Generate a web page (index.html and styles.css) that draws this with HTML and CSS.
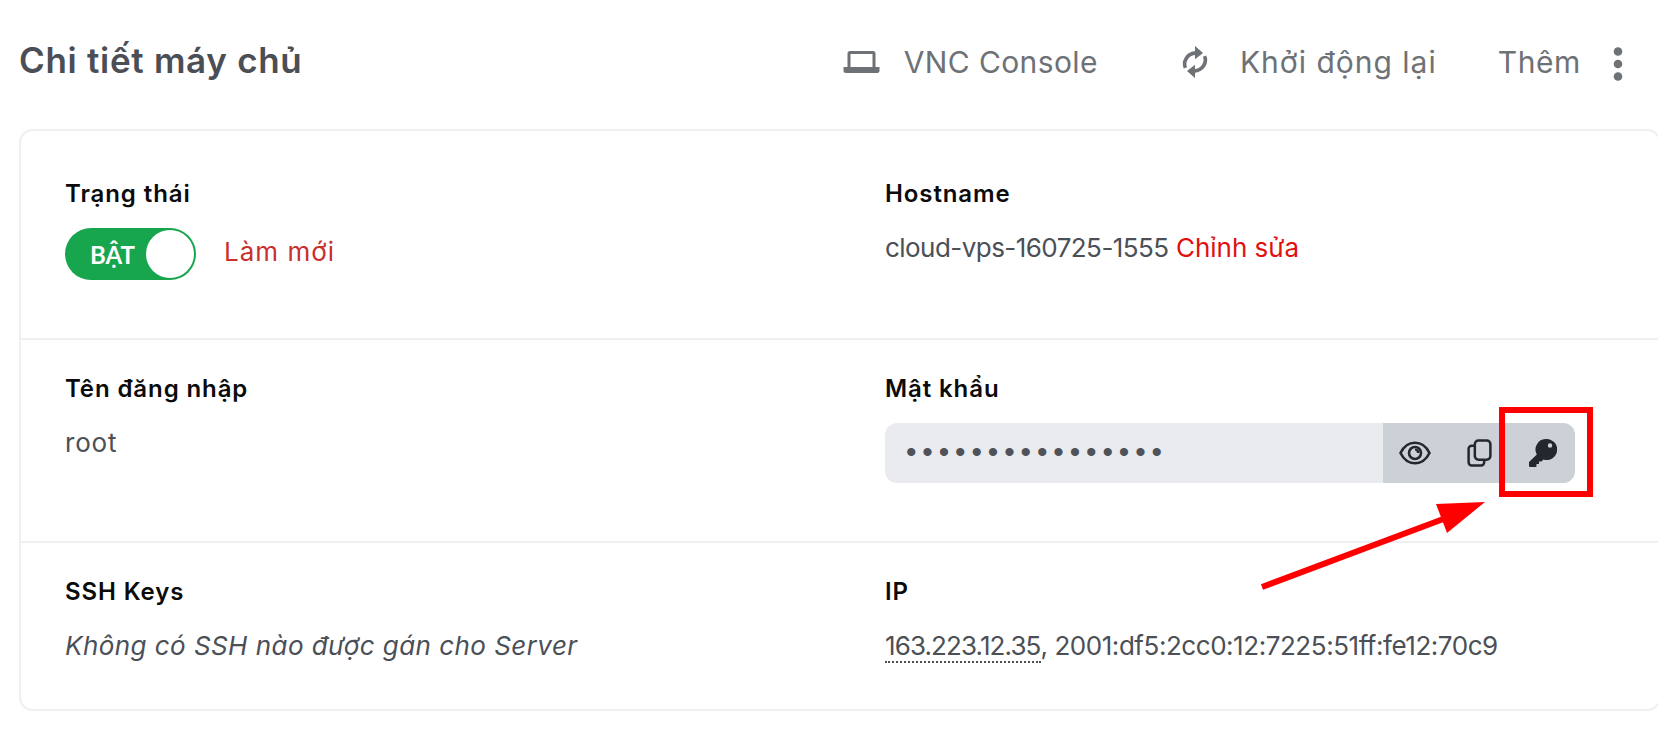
FILE: index.html
```html
<!DOCTYPE html>
<html lang="vi">
<head>
<meta charset="utf-8">
<title>Chi tiết máy chủ</title>
<link rel="stylesheet" href="styles.css">
</head>
<body>
<header class="topbar">
  <h1 class="title">Chi tiết máy chủ</h1>
  <nav class="actions">
    <a class="action action-vnc">
      <svg class="icon-laptop" viewBox="0 0 36 24"><path fill="none" stroke="currentColor" stroke-width="3" d="M5.500 18V3.500a1 1 0 0 1 1-1h23a1 1 0 0 1 1 1V18"/><path fill="currentColor" d="M0 17h36v3.500a2.500 2.500 0 0 1-2.500 2.500h-31A2.500 2.500 0 0 1 0 20.500z"/></svg>
      <span class="action-text">VNC Console</span>
    </a>
    <a class="action action-restart">
      <svg class="icon-sync" viewBox="0 0 24 30"><path fill="none" stroke="currentColor" stroke-width="3.400" d="M3 20.500C.6 14.500 4.500 7 13 6.500M21 9.500c2.400 6-1.500 13.500-10 14"/><path fill="currentColor" d="M12 0l7.500 6.500L12 12.500zM12 17.500l-7.500 6L12 30z"/></svg>
      <span class="action-text">Khởi động lại</span>
    </a>
    <a class="action action-more">
      <span class="action-text">Thêm</span>
      <svg class="icon-dots" viewBox="0 0 10 34"><circle cx="5" cy="4.500" r="4.300"/><circle cx="5" cy="17" r="4.300"/><circle cx="5" cy="29.500" r="4.300"/></svg>
    </a>
  </nav>
</header>

<main class="card">
  <section class="row row-1">
    <div class="cell">
      <div class="label">Trạng thái</div>
      <div class="status">
        <div class="toggle"><span class="toggle-text">BẬT</span><span class="knob"></span></div>
        <a class="refresh">Làm mới</a>
      </div>
    </div>
    <div class="cell">
      <div class="label">Hostname</div>
      <div class="value host"><span class="digits">cloud-vps-160725-1555</span> <a class="edit">Chỉnh sửa</a></div>
    </div>
  </section>
  <section class="row row-2">
    <div class="cell">
      <div class="label">Tên đăng nhập</div>
      <div class="value root">root</div>
    </div>
    <div class="cell">
      <div class="label">Mật khẩu</div>
      <div class="password">
        <div class="dots">••••••••••••••••</div>
        <div class="addons">
          <button class="addon">
            <svg viewBox="0 0 32 24" class="icon-eye"><path fill="none" stroke="currentColor" stroke-width="2.600" d="M1.500 12C5 5 10 1.800 16 1.800S27 5 30.500 12C27 19 22 22.200 16 22.200S5 19 1.500 12z"/><circle cx="16" cy="12" r="6" fill="none" stroke="currentColor" stroke-width="2.600"/><path fill="currentColor" d="M16 7.500a4.500 4.500 0 0 1 4.500 4.500h-2.500a2.500 2.500 0 0 0-2-2.400z"/></svg>
          </button>
          <button class="addon">
            <svg viewBox="0 0 24 27" class="icon-copy"><path fill="none" stroke="currentColor" stroke-width="2.400" d="M7.500 5a3.500 3.500 0 0 1 3.500-3.500h8a3.500 3.500 0 0 1 3.500 3.500v11.500a3.500 3.500 0 0 1-3.500 3.500h-8a3.500 3.500 0 0 1-3.500-3.500z"/><path fill="none" stroke="currentColor" stroke-width="2.400" d="M7.500 6.500H4.500a3 3 0 0 0-3 3v13a3 3 0 0 0 3 3h9a3 3 0 0 0 3-3V20"/></svg>
          </button>
          <button class="addon">
            <svg viewBox="0 0 28 28" class="icon-key"><path fill="currentColor" fill-rule="evenodd" d="M17.500 0a10.500 10.500 0 1 1-3 20.500L12.500 22.500H10V25H7.500v2a1 1 0 0 1-1 1H1a1 1 0 0 1-1-1v-4l7.800-7.500A10.500 10.500 0 0 1 17.500 0zm3.500 4.300a2.200 2.200 0 1 0 0 4.400 2.200 2.200 0 0 0 0-4.400z"/></svg>
          </button>
        </div>
      </div>
    </div>
  </section>
  <section class="row row-3">
    <div class="cell">
      <div class="label">SSH Keys</div>
      <div class="value note">Không có SSH nào được gán cho Server</div>
    </div>
    <div class="cell">
      <div class="label">IP</div>
      <div class="value ip"><span class="ip-main">163.223.12.35</span>, 2001:df5:2cc0:12:7225:51ff:fe12:70c9</div>
    </div>
  </section>
</main>

<div class="highlight"></div>
<svg class="arrow" viewBox="0 0 1658 734"><path d="M1262 587L1446 518" stroke="#f00" stroke-width="6" fill="none"/><path fill="#f00" d="M1485 502L1436 504L1447 533z"/></svg>
</body>
</html>
```
FILE: styles.css
```css
* { box-sizing: border-box; }
html, body { margin: 0; height: 734px; overflow: hidden; background: #fff; }
body {
  position: relative;
  padding: 0 0 0 19px;
  font-family: Inter, "Noto Sans", sans-serif;
  color: #4b4f56;
}
.topbar {
  height: 129px;
  padding-bottom: 10px;
  display: flex;
  align-items: center;
  justify-content: space-between;
}
.title { margin: 0; font-size: 35px; font-weight: 600; letter-spacing: .7px; color: #4b4e54; }
.actions { display: flex; align-items: center; color: #6e7175; font-size: 30px; letter-spacing: .6px; margin: 4px 35px 0 0; }
.action { display: flex; align-items: center; }
.action-vnc { gap: 24px; letter-spacing: .4px; }
.action-restart { gap: 32px; margin-left: 84px; letter-spacing: 1px; }
.action-more { gap: 32px; margin-left: 61px; }
.icon-laptop { width: 37px; height: 24px; }
.icon-sync { width: 26px; height: 32px; }
.icon-dots { width: 10px; height: 34px; margin-top: 4px; fill: currentColor; }
.card {
  height: 582px;
  margin-right: -3px;
  border: 2px solid #eeeff1;
  border-radius: 14px;
  display: flex;
  flex-direction: column;
}
.row { display: grid; grid-template-columns: 820px 1fr; padding: 0 44px; border-bottom: 2px solid #eeeff1; }
.row-1 { height: 209px; padding-top: 47px; }
.row-2 { height: 203px; padding-top: 33px; }
.row-3 { flex: 1; border-bottom: 0; padding-top: 33px; }
.label { font-size: 24px; font-weight: 600; letter-spacing: .9px; color: #0b0b0c; line-height: 32px; }
.value { font-size: 26px; line-height: 36px; }
.status { display: flex; align-items: center; margin-top: 18px; gap: 28px; }
.toggle {
  width: 131px; height: 52px; border-radius: 26px; background: #17a54d;
  display: flex; align-items: center; justify-content: space-between;
  padding: 0 2px 0 25px;
}
.toggle-text { color: #fff; font-family: Lato, sans-serif; font-weight: 700; font-size: 24px; }
.knob { width: 48px; height: 48px; border-radius: 50%; background: #fff; }
.refresh { color: #c9302c; font-size: 26px; letter-spacing: 1px; position: relative; top: -3px; }
.host { margin-top: 20px; }
.digits { letter-spacing: -.55px; }
.edit { color: #e0100f; }
.root { margin-top: 20px; letter-spacing: .8px; }
.password {
  width: 690px; height: 60px; margin-top: 18px; border-radius: 12px; background: #e9ebef;
  display: flex; justify-content: space-between; overflow: hidden;
}
.dots { padding-left: 21px; font-family: "Liberation Sans", sans-serif; font-size: 30px; line-height: 58px; letter-spacing: 5.870px; color: #4f5258; }
.addons { width: 192px; display: flex; background: #ccd1d8; }
.addon { flex: 1; border: 0; background: none; padding: 0; color: #23282e; display: flex; align-items: center; justify-content: center; }
.icon-eye { width: 32px; height: 24px; }
.icon-copy { width: 25px; height: 28px; }
.icon-key { width: 28px; height: 28px; }
.note { font-style: italic; letter-spacing: .45px; margin-top: 20px; }
.ip { margin-top: 20px; letter-spacing: -.45px; }
.ip-main { border-bottom: 2px dotted #4b4f56; letter-spacing: -.9px; }
.highlight { position: absolute; left: 1499px; top: 407px; width: 94px; height: 90px; border: 6px solid #f00; }
.arrow { position: absolute; left: 0; top: 0; width: 1658px; height: 734px; pointer-events: none; }
```
